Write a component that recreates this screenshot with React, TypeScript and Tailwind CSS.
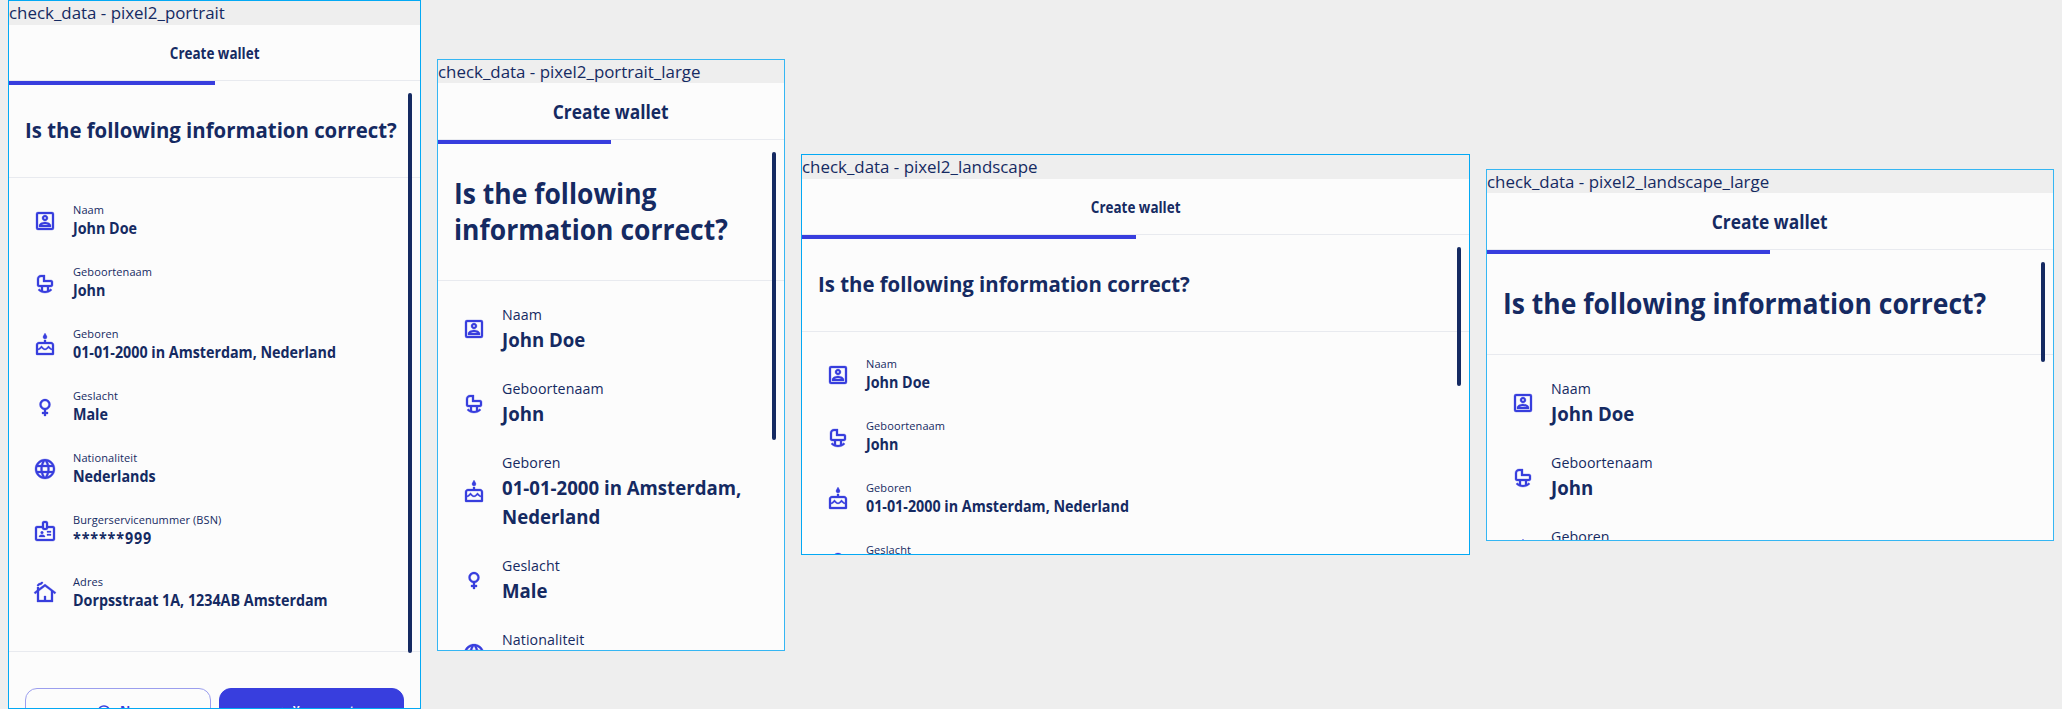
import { MdFemale, MdLanguage, MdOutlineBadge, MdOutlineBlock, MdOutlineCake, MdOutlineCottage, MdOutlineCrib, MdCheck } from "react-icons/md";

function AccountBox({ className }: { className?: string }) {
  return (
    <svg viewBox="0 0 24 24" fill="currentColor" stroke="currentColor" strokeWidth="0" className={className}>
      <path d="M19 3H5a2 2 0 0 0-2 2v14a2 2 0 0 0 2 2h14a2 2 0 0 0 2-2V5a2 2 0 0 0-2-2zm0 16H5V5h14v14z" />
      <path d="M12 12c1.65 0 3-1.35 3-3s-1.35-3-3-3-3 1.35-3 3 1.35 3 3 3zm0-4c.55 0 1 .45 1 1s-.45 1-1 1-1-.45-1-1 .45-1 1-1zM18 16.58c0-2.5-3.97-3.58-6-3.58s-6 1.08-6 3.58V18h12v-1.42zM8.48 16c.74-.51 2.23-1 3.52-1s2.78.49 3.52 1H8.48z" />
    </svg>
  );
}

const ROWS = [
  { icon: AccountBox, label: "Naam", value: "John Doe" },
  { icon: MdOutlineCrib, label: "Geboortenaam", value: "John" },
  { icon: MdOutlineCake, label: "Geboren", value: "01-01-2000 in Amsterdam, Nederland" },
  { icon: MdFemale, label: "Geslacht", value: "Male" },
  { icon: MdLanguage, label: "Nationaliteit", value: "Nederlands" },
  { icon: MdOutlineBadge, label: "Burgerservicenummer (BSN)", value: "******999", spaced: true },
  { icon: MdOutlineCottage, label: "Adres", value: "Dorpsstraat 1A, 1234AB Amsterdam" },
];

type ScreenProps = {
  name: string;
  large?: boolean;
  rowCount: number;
  frame: string;
  progress: string;
  scrollbar: string;
  footer?: boolean;
};

function Screen({ name, large = false, rowCount, frame, progress, scrollbar, footer = false }: ScreenProps) {
  return (
    <section className={`relative shrink-0 overflow-hidden border bg-[#fcfcfc] ${large ? "border-[#35b6f3]" : "border-[#03a9f4]"} ${frame}`}>
      <div className={`bg-[#eeeeee] text-[16.9px] leading-[24px] whitespace-nowrap ${large ? "h-[23.5px]" : "h-6"}`}>{name}</div>
      <div className={`flex items-center justify-center border-b border-[#e8eaef] pt-[3px] font-bold ${large ? "h-[56.5px] text-[20px]" : "h-14 text-[15.5px]"}`}>
        <span className="scale-x-[0.868]">Create wallet</span>
      </div>
      <div className={`h-1 bg-[#383ede] ${progress}`} />
      <div className={`border-b border-[#e8eaef] px-4 font-bold ${large ? "pt-[31px] pb-[33px] text-[28.6px] leading-[36px]" : "pt-[30px] pb-[34px] text-[22px] leading-[28px]"}`}>
        <div className="w-[108%] origin-left scale-x-[0.926]">Is the following information correct?</div>
      </div>
      <div className={`flex flex-col gap-6 px-6 ${large ? "pt-[23px]" : "pt-[24px]"}`}>
        {ROWS.slice(0, rowCount).map(({ icon: Icon, label, value, spaced }) => (
          <div key={label} className="flex items-center gap-4">
            <Icon className={`size-6 shrink-0 text-[#383ede] [&_path:not([fill=none])]:stroke-[0.3px] ${large ? "mt-px" : ""}`} />
            <div className="min-w-0 flex-1">
              <div className={large ? "text-[14.2px] leading-[21px] tracking-[0.1px]" : "text-[11px] leading-[16px] tracking-[0.1px]"}>{label}</div>
              <div
                className={`w-[110%] origin-left font-bold ${large ? "scale-x-[0.913] text-[20.4px] leading-[29px]" : "-mt-px mb-px scale-x-[0.905] text-[15.8px] leading-[22px]"} ${spaced ? "tracking-[0.95px]" : ""}`}
              >
                {value}
              </div>
            </div>
          </div>
        ))}
      </div>
      {footer && (
        <div className="mt-[39px] flex gap-2 border-t border-[#e8eaef] px-4 pt-9 text-[14px] font-bold">
          <div className="flex h-12 flex-1 items-center justify-center gap-2 rounded-xl border border-[#9b9eee] text-[#383ede]">
            <MdOutlineBlock className="size-4" />
            <span className="-mt-1 origin-left scale-x-90">No</span>
          </div>
          <div className="flex h-12 flex-1 items-center justify-center gap-2 rounded-xl border border-[#383ede] bg-[#383ede] text-[#fcfcfc]">
            <MdCheck className="size-4" />
            <span className="-mt-1 w-[60px] origin-left scale-x-75 whitespace-nowrap">Yes, correct</span>
          </div>
        </div>
      )}
      <div className={`absolute right-2 w-1 rounded-full bg-[#152a62] ${scrollbar}`} />
    </section>
  );
}

export default function App() {
  return (
    <main className="flex h-[709px] items-center gap-4 overflow-hidden bg-[#eeeeee] pl-2 font-['Open_Sans',sans-serif] text-[#152a62]">
      <Screen name="check_data - pixel2_portrait" rowCount={7} frame="w-[413px] h-[709px]" progress="w-[206px]" scrollbar="top-[92px] h-[560px]" footer />
      <Screen name="check_data - pixel2_portrait_large" large rowCount={5} frame="w-[348px] h-[592px]" progress="w-[173px]" scrollbar="top-[92px] h-[288px]" />
      <Screen name="check_data - pixel2_landscape" rowCount={4} frame="w-[669px] h-[401px]" progress="w-[334px]" scrollbar="top-[92px] h-[139px]" />
      <Screen name="check_data - pixel2_landscape_large" large rowCount={3} frame="w-[568px] h-[372px]" progress="w-[283px]" scrollbar="top-[92px] h-[100px]" />
    </main>
  );
}
